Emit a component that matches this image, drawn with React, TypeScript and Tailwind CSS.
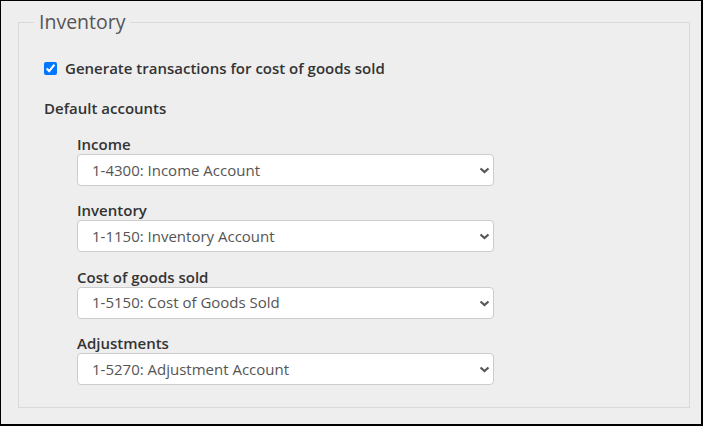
import React from 'react';

const accounts = [
  { label: 'Income', value: '1-4300: Income Account' },
  { label: 'Inventory', value: '1-1150: Inventory Account' },
  { label: 'Cost of goods sold', value: '1-5150: Cost of Goods Sold' },
  { label: 'Adjustments', value: '1-5270: Adjustment Account' },
];

function AccountSelect({ label, value }: { label: string; value: string }) {
  return (
    <div className="mb-[14.33px]">
      <label className="block text-[15px] leading-[20px] font-semibold text-[#333]">{label}</label>
      <div className="relative w-[417px]">
        <select
          defaultValue={value}
          className="block w-full h-[32px] appearance-none rounded-[4px] border border-[#cccccc] bg-white pl-[14px] pr-8 text-[15px] text-[#555] outline-none"
        >
          <option>{value}</option>
        </select>
        <svg
          className="pointer-events-none absolute right-[4px] top-[13px]"
          width="11"
          height="7"
          viewBox="0 0 11 7"
        >
          <path d="M1.5 1.5 L5.5 5 L9.5 1.5" fill="none" stroke="#555" strokeWidth="2.2" />
        </svg>
      </div>
    </div>
  );
}

export default function App() {
  return (
    <div
      className="h-[426px] w-[703px] border-t border-l border-r-2 border-b-2 border-black bg-[#eeeeee] pl-[17px] pr-[11px] pt-[9px]"
      style={{ fontFamily: '"Open Sans", "Liberation Sans", sans-serif' }}
    >
      {/* Inventory settings */}
      <fieldset className="border border-[#dadada] pl-[25px] pr-4 pb-[8px] pt-[24px]">
        <legend className="-ml-[10px] px-[5px] text-[19.5px] font-normal leading-[24px] text-[#555]">
          Inventory
        </legend>

        <label className="flex items-center gap-[8px] text-[15px] leading-[20px] font-semibold text-[#333]">
          <input type="checkbox" defaultChecked className="m-0 h-[13px] w-[13px] accent-[#0075ff]" />
          Generate transactions for cost of goods sold
        </label>

        <div className="mt-[20px] text-[15px] font-semibold leading-[20px] text-[#333]">Default accounts</div>

        <div className="mt-[16px] pl-[33px]">
          {accounts.map((a) => (
            <AccountSelect key={a.label} label={a.label} value={a.value} />
          ))}
        </div>
      </fieldset>
    </div>
  );
}
